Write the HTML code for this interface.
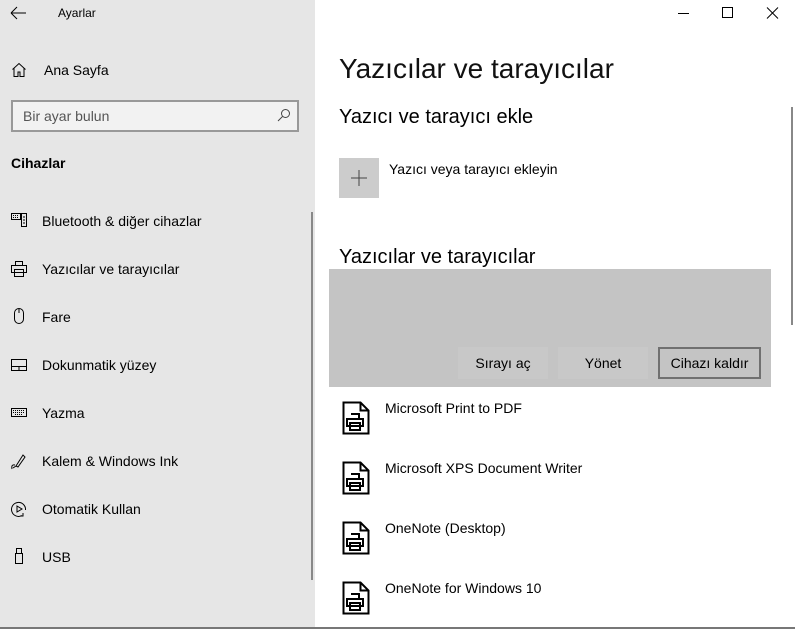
<!DOCTYPE html>
<html><head><meta charset="utf-8"><style>
*{margin:0;padding:0;box-sizing:border-box}
body{width:795px;height:629px;overflow:hidden;font-family:"Segoe UI","Liberation Sans",sans-serif;background:#fff;position:relative;color:#000}
.side{position:absolute;left:0;top:0;width:315px;height:627px;background:#e6e6e6}
.abs{position:absolute;white-space:nowrap}
.nav{position:absolute;left:42px;font-size:14px;color:#000}
.ic{position:absolute;left:10px}
.bottom{position:absolute;left:0;top:627px;width:795px;height:2px;background:#777}
.btn{position:absolute;top:347px;height:32px;font-size:14px;text-align:center;line-height:32px}
</style></head><body>
<div class="side"></div>
<svg class="abs" style="left:10px;top:6px" width="18" height="14"><path d="M1 7H16M1 7L7 1M1 7L7 13" stroke="#000" fill="none" stroke-width="1"/></svg>
<div class="abs" style="left:58px;top:6px;font-size:12px">Ayarlar</div>
<svg class="abs" style="left:11px;top:62px" width="16" height="16"><path d="M1.5 7.5L8 1.5L14.5 7.5M3 6V14.5H7V10H9V14.5H13V6" stroke="#000" fill="none"/></svg>
<div class="abs" style="left:44px;top:62px;font-size:14px">Ana Sayfa</div>
<div class="abs" style="left:11px;top:100px;width:288px;height:32px;border:2px solid #999;background:#f2f2f2"></div>
<div class="abs" style="left:23px;top:108px;font-size:14px;color:#555">Bir ayar bulun</div>
<svg class="abs" style="left:277px;top:108px" width="14" height="14"><circle cx="8.5" cy="5.5" r="4" stroke="#444" fill="none"/><path d="M5.5 8.5L1 13" stroke="#444"/></svg>
<div class="abs" style="left:11px;top:155px;font-size:14px;font-weight:bold">Cihazlar</div>
<div class="abs" style="left:311px;top:212px;width:2px;height:368px;background:#888"></div>

<svg class="ic" style="top:211px" width="18" height="18"><rect x="1.5" y="2.5" width="9" height="6" fill="none" stroke="#000"/><path d="M3 4.5h6M3 6.5h6" stroke="#000" stroke-dasharray="1 1"/><rect x="11.5" y="2.5" width="5" height="13" fill="none" stroke="#000"/><path d="M13 6h2M13 9h2M13 12h2" stroke="#000"/></svg>
<div class="nav" style="top:213px">Bluetooth &amp; diğer cihazlar</div>
<svg class="ic" style="top:260px" width="18" height="18"><path d="M5.5 5.5V1.5H12.5V5.5M1.5 5.5H16.5V12.5H1.5ZM4.5 9.5H13.5V16.5H4.5Z" fill="none" stroke="#000"/></svg>
<div class="nav" style="top:261px">Yazıcılar ve tarayıcılar</div>
<svg class="ic" style="top:307px" width="18" height="18"><rect x="4.5" y="1.5" width="9" height="15" rx="4.5" fill="none" stroke="#000"/><path d="M9 1.5V6" stroke="#000"/></svg>
<div class="nav" style="top:309px">Fare</div>
<svg class="ic" style="top:356px" width="18" height="18"><rect x="1.5" y="3.5" width="15" height="11" fill="none" stroke="#000"/><path d="M1.5 10.5H16.5M9 10.5V14.5" stroke="#000"/></svg>
<div class="nav" style="top:357px">Dokunmatik yüzey</div>
<svg class="ic" style="top:404px" width="18" height="18"><rect x="1.5" y="4.5" width="15" height="8" fill="none" stroke="#000"/><path d="M3 6.5h12M3 8.5h12M5 10.5h8" stroke="#000" stroke-dasharray="1 1"/></svg>
<div class="nav" style="top:405px">Yazma</div>
<svg class="ic" style="top:452px" width="18" height="18"><path d="M6 14L13 3L15 5L8 15ZM6 14L3 16M2 17Q1 12 5 13" fill="none" stroke="#000"/></svg>
<div class="nav" style="top:453px">Kalem &amp; Windows Ink</div>
<svg class="ic" style="top:500px" width="18" height="18"><path d="M12 15.5A7 7 0 1 1 15.5 10" fill="none" stroke="#000"/><path d="M7 6L12 9L7 12Z" fill="none" stroke="#000"/><path d="M10 16H13V13" fill="none" stroke="#000"/></svg>
<div class="nav" style="top:501px">Otomatik Kullan</div>
<svg class="ic" style="top:547px" width="18" height="18"><path d="M6.5 1.5H11.5V6.5H6.5ZM5.5 6.5H12.5V16.5H5.5Z" fill="none" stroke="#000"/></svg>
<div class="nav" style="top:549px">USB</div>

<svg class="abs" style="left:675px;top:6px" width="110" height="14"><path d="M3 7.5H14" stroke="#000"/><rect x="47.5" y="1.5" width="10" height="10" fill="none" stroke="#000"/><path d="M92 1.5L103 12.5M103 1.5L92 12.5" stroke="#000"/></svg>
<div class="abs" style="left:791px;top:107px;width:2px;height:218px;background:#888"></div>

<div class="abs" style="left:339px;top:53px;font-size:28px;color:#111">Yazıcılar ve tarayıcılar</div>
<div class="abs" style="left:339px;top:106px;font-size:20px">Yazıcı ve tarayıcı ekle</div>
<div class="abs" style="left:339px;top:158px;width:40px;height:40px;background:#ccc"></div>
<svg class="abs" style="left:349px;top:168px" width="20" height="20"><path d="M10 2V18M2 10H18" stroke="#444"/></svg>
<div class="abs" style="left:389px;top:161px;font-size:14px">Yazıcı veya tarayıcı ekleyin</div>
<div class="abs" style="left:339px;top:246px;font-size:20px">Yazıcılar ve tarayıcılar</div>
<div class="abs" style="left:329px;top:269px;width:442px;height:118px;background:#c4c4c4"></div>
<div class="btn" style="left:458px;width:90px;background:#c8c8c8">Sırayı aç</div>
<div class="btn" style="left:558px;width:90px;background:#c8c8c8">Yönet</div>
<div class="btn" style="left:658px;width:103px;border:2px solid #707070;line-height:28px">Cihazı kaldır</div>

<svg class="abs" style="left:342px;top:401px" width="30" height="34"><path d="M1.5 1.5H18.5L26.5 9.5V32.5H1.5Z M18.5 1.5V9.5H26.5" fill="none" stroke="#000" stroke-width="2"/><path d="M9 13H17V18M5 18H21V25H5ZM8 22H18V29H8Z" fill="none" stroke="#000" stroke-width="2"/></svg>
<div class="abs" style="left:385px;top:400px;font-size:14px">Microsoft Print to PDF</div>
<svg class="abs" style="left:342px;top:461px" width="30" height="34"><path d="M1.5 1.5H18.5L26.5 9.5V32.5H1.5Z M18.5 1.5V9.5H26.5" fill="none" stroke="#000" stroke-width="2"/><path d="M9 13H17V18M5 18H21V25H5ZM8 22H18V29H8Z" fill="none" stroke="#000" stroke-width="2"/></svg>
<div class="abs" style="left:385px;top:460px;font-size:14px">Microsoft XPS Document Writer</div>
<svg class="abs" style="left:342px;top:521px" width="30" height="34"><path d="M1.5 1.5H18.5L26.5 9.5V32.5H1.5Z M18.5 1.5V9.5H26.5" fill="none" stroke="#000" stroke-width="2"/><path d="M9 13H17V18M5 18H21V25H5ZM8 22H18V29H8Z" fill="none" stroke="#000" stroke-width="2"/></svg>
<div class="abs" style="left:385px;top:520px;font-size:14px">OneNote (Desktop)</div>
<svg class="abs" style="left:342px;top:581px" width="30" height="34"><path d="M1.5 1.5H18.5L26.5 9.5V32.5H1.5Z M18.5 1.5V9.5H26.5" fill="none" stroke="#000" stroke-width="2"/><path d="M9 13H17V18M5 18H21V25H5ZM8 22H18V29H8Z" fill="none" stroke="#000" stroke-width="2"/></svg>
<div class="abs" style="left:385px;top:580px;font-size:14px">OneNote for Windows 10</div>
<div class="bottom"></div>
</body></html>
